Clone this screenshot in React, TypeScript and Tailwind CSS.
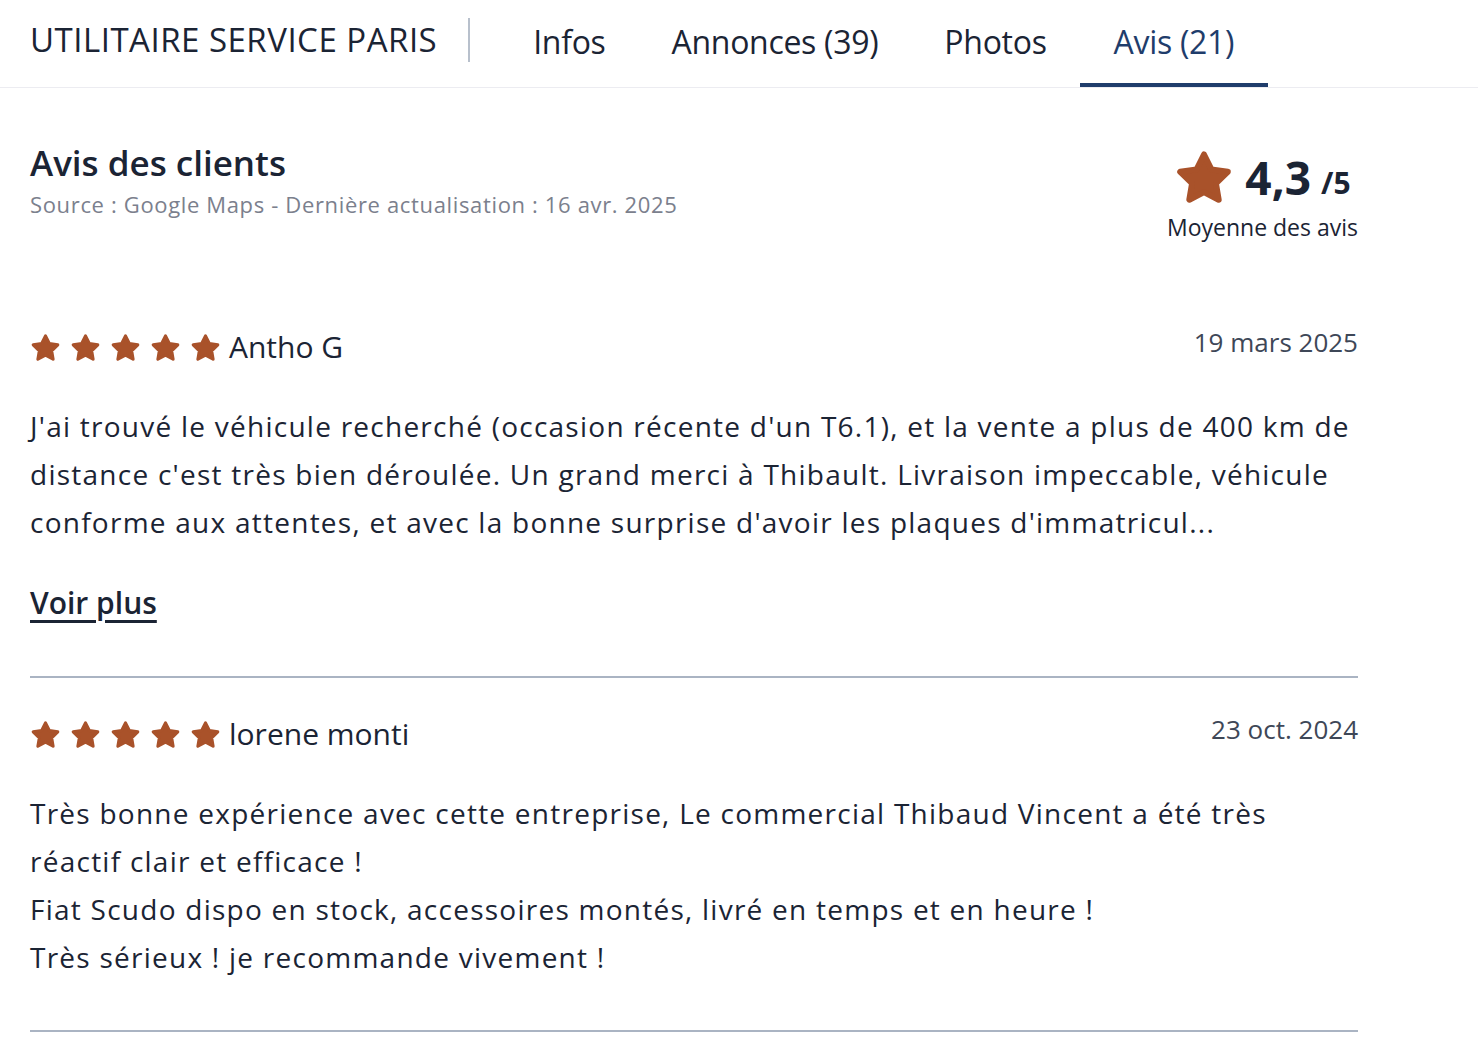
import React from 'react';

const tabs = [
  { label: 'Infos', active: false },
  { label: 'Annonces (39)', active: false },
  { label: 'Photos', active: false },
  { label: 'Avis (21)', active: true },
];

const reviews = [
  {
    name: 'Antho G',
    date: '19 mars 2025',
    lines: [
      "J'ai trouvé le véhicule recherché (occasion récente d'un T6.1), et la vente a plus de 400 km de distance c'est très bien déroulée. Un grand merci à Thibault. Livraison impeccable, véhicule conforme aux attentes, et avec la bonne surprise d'avoir les plaques d'immatricul...",
    ],
    more: true,
  },
  {
    name: 'lorene monti',
    date: '23 oct. 2024',
    lines: [
      'Très bonne expérience avec cette entreprise, Le commercial Thibaud Vincent a été très réactif clair et efficace !',
      'Fiat Scudo dispo en stock, accessoires montés, livré en temps et en heure !',
      'Très sérieux ! je recommande vivement !',
    ],
    more: false,
  },
];

// rounded, chubby star
const Star = ({ size }: { size: number }) => (
  <svg width={size} height={size} viewBox="0 0 24 24" className="shrink-0">
    <polygon
      points="12,3 14.94,8.95 21.51,9.91 16.76,14.55 17.88,21.09 12,18 6.12,21.09 7.24,14.55 2.49,9.91 9.06,8.95"
      fill="#a9522a"
      stroke="#a9522a"
      strokeWidth="2.4"
      strokeLinejoin="round"
    />
  </svg>
);

export default function App() {
  return (
    <div className="min-h-screen bg-white text-[#1b2434] font-['Open_Sans','Noto_Sans',sans-serif]">
      {/* Top bar */}
      <div className="flex h-[88px] items-center border-b border-[#ececf1] pl-[30px]">
        <div className="pb-[8px] text-[33px] font-medium tracking-[0.5px]">UTILITAIRE SERVICE PARIS</div>
        <div className="ml-[31px] mr-[30px] mb-[8px] h-[44px] w-[2px] bg-[#b8c0cc]" />
        <div className="flex h-full">
          {tabs.map((t) => (
            <div
              key={t.label}
              className={
                t.active
                  ? 'flex h-full items-center border-b-4 border-[#1f3d6b] px-[34px] text-[32px] tracking-[-0.3px] text-[#1f3d6b]'
                  : 'flex h-full items-center border-b-4 border-transparent px-[33px] text-[32px] tracking-[-0.3px]'
              }
            >
              {t.label}
            </div>
          ))}
        </div>
      </div>

      <div className="ml-[30px] w-[1328px]">
        {/* Summary */}
        <div className="flex items-start justify-between pt-[53px] pb-[50px]">
          <div>
            <h2 className="text-[35px] font-semibold leading-[44px]">Avis des clients</h2>
            <p className="mt-[5px] text-[22px] leading-[28px] tracking-[0.65px] text-[#7b808d]">
              Source : Google Maps - Dernière actualisation : 16 avr. 2025
            </p>
          </div>
          <div className="flex flex-col items-center pt-[6px]">
            <div className="flex items-center">
              <Star size={60} />
              <span className="ml-[11px] text-[46px] font-bold leading-[60px]">4,3</span>
              <span className="ml-[10px] mt-[10px] text-[30px] font-bold">/5</span>
            </div>
            <div className="mt-[6px] text-[23px] leading-[28px]">Moyenne des avis</div>
          </div>
        </div>

        {/* Reviews */}
        {reviews.map((r) => (
          <div key={r.name} className="border-b-2 border-[#aab4c3] pt-[38px] pb-[49px]">
            <div className="flex h-[36px] items-center justify-between">
              <div className="flex items-center">
                <div className="flex gap-[9px]">
                  {[0, 1, 2, 3, 4].map((i) => (
                    <Star key={i} size={31} />
                  ))}
                </div>
                <span className="ml-[8px] text-[30px] leading-[36px]">{r.name}</span>
              </div>
              <span className="self-start text-[26px] leading-[26px] text-[#3e4757]">{r.date}</span>
            </div>
            <div className="mt-[37px] text-[28px] leading-[48px] tracking-[1.25px]">
              {r.lines.map((l, i) => (
                <p key={i}>{l}</p>
              ))}
            </div>
            {r.more && (
              <a href="#" className="mt-[33px] block w-fit text-[30px] font-semibold leading-[48px] underline underline-offset-[6px]">
                Voir plus
              </a>
            )}
          </div>
        ))}
      </div>
    </div>
  );
}
